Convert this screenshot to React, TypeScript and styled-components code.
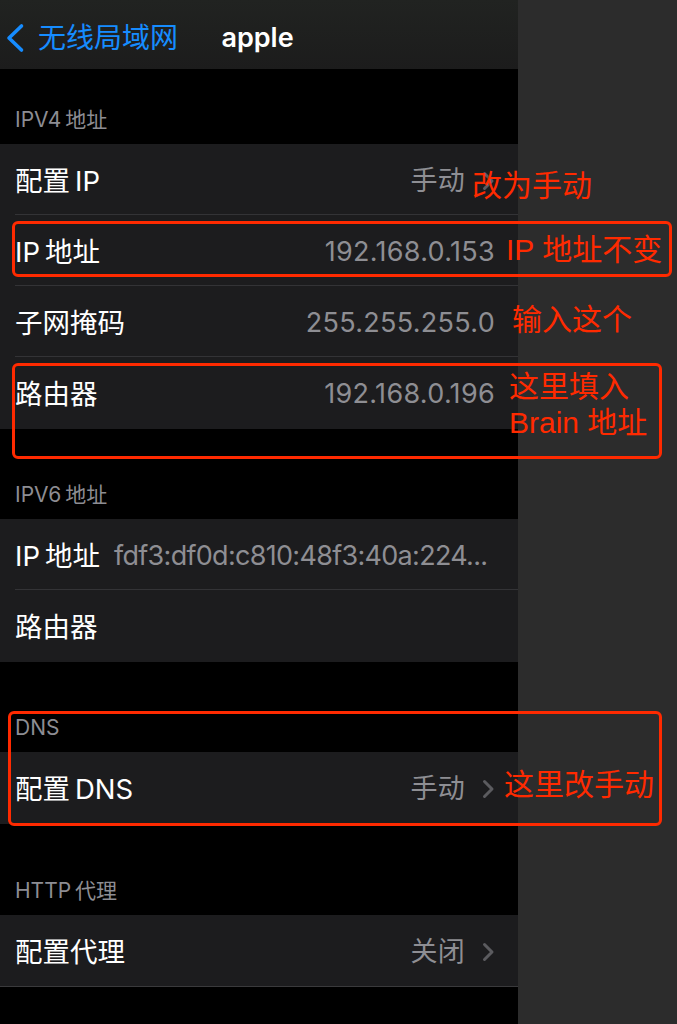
import React from "react";
import styled, { createGlobalStyle } from "styled-components";

const Global = createGlobalStyle`
  html, body { margin: 0; padding: 0; background: #000; }
  * { box-sizing: border-box; }
`;

const FONT = `Inter, "Noto Sans CJK SC", sans-serif`;
const NOTE_FONT = `"Liberation Sans", "Noto Sans CJK SC", sans-serif`;
const RED = "#ff2a00";

const Root = styled.div`
  position: relative;
  width: 677px;
  height: 1024px;
  display: flex;
  font-family: ${FONT};
  overflow: hidden;
`;

const Phone = styled.div`
  width: 518px;
  background: #000;
  display: flex;
  flex-direction: column;
`;

const Side = styled.div`
  flex: 1;
  background: #2c2c2c;
`;

const Nav = styled.div`
  height: 69px;
  display: grid;
  grid-template-columns: 1fr auto 1fr;
  align-items: center;
  padding: 6px 8px 0 5px;
  background: linear-gradient(180deg, #212321 0%, #1c1c1c 100%);
`;

const Back = styled.div`
  display: flex;
  align-items: center;
  gap: 13px;
  color: #168cff;
  font-size: 28px;
  line-height: 32px;
`;

const Title = styled.div`
  color: #fff;
  font-size: 27px;
  font-weight: 600;
  line-height: 32px;
`;

const Header = styled.div<{ $h: number }>`
  height: ${(p) => p.$h}px;
  display: flex;
  align-items: flex-end;
  padding: 0 15px 11px;
  color: #8d8d93;
  font-size: 21px;
  line-height: 26px;
`;

const Group = styled.div<{ $bottom?: boolean }>`
  background: #1c1c1e;
  border-bottom: 1px solid ${(p) => (p.$bottom ? "#3a3a3c" : "transparent")};
`;

const Row = styled.div`
  padding-left: 15px;
`;

const RowInner = styled.div<{ $last?: boolean }>`
  height: 71px;
  display: flex;
  align-items: center;
  padding: 3px 23px 0 0;
  border-bottom: 1px solid ${(p) => (p.$last ? "transparent" : "#333336")};
`;

const Label = styled.div`
  color: #fff;
  font-size: 27.5px;
  line-height: 32px;
  white-space: nowrap;
`;

const Value = styled.div<{ $left?: boolean }>`
  flex: 1;
  min-width: 0;
  color: #8e8e93;
  font-size: 27px;
  line-height: 32px;
  white-space: nowrap;
  overflow: hidden;
  text-overflow: ellipsis;
  letter-spacing: ${(p) => (p.$left ? "-0.7px" : "0.3px")};
  text-align: ${(p) => (p.$left ? "left" : "right")};
  padding-left: ${(p) => (p.$left ? "14px" : "10px")};
`;

const Chevron = styled.svg`
  margin-left: 17px;
  flex: none;
`;

const Overlay = styled.div`
  position: absolute;
  inset: 0;
  pointer-events: none;
`;

const Box = styled.div`
  position: absolute;
  border: 3px solid ${RED};
  border-radius: 6px;
`;

const Note = styled.div`
  position: absolute;
  color: ${RED};
  font-family: ${NOTE_FONT};
  font-size: 30px;
  line-height: 36px;
  white-space: nowrap;
`;

const RightChevron = () => (
  <Chevron width="13" height="20" viewBox="0 0 13 20">
    <path d="M2.5 2.5 L10 10 L2.5 17.5" fill="none" stroke="#5b5b5f" strokeWidth="3" strokeLinecap="round" strokeLinejoin="round" />
  </Chevron>
);

type Item = { label: string; value?: string; chevron?: boolean; left?: boolean };

const Section = ({ items, bottom }: { items: Item[]; bottom?: boolean }) => (
  <Group $bottom={bottom}>
    {items.map((it, i) => (
      <Row key={i}>
        <RowInner $last={i === items.length - 1}>
          <Label>{it.label}</Label>
          <Value $left={it.left}>{it.value ?? ""}</Value>
          {it.chevron && <RightChevron />}
        </RowInner>
      </Row>
    ))}
  </Group>
);

export default function App() {
  return (
    <>
      <Global />
      <Root>
        <Phone>
          <Nav>
            <Back>
              <svg width="20" height="30" viewBox="0 0 20 30">
                <path d="M16.5 3 L4 15 L16.5 27" fill="none" stroke="#168cff" strokeWidth="3.6" strokeLinecap="round" strokeLinejoin="round" />
              </svg>
              无线局域网
            </Back>
            <Title>apple</Title>
            <div />
          </Nav>
          <Header $h={75}>IPV4&#8201;地址</Header>
          <Section
            items={[
              { label: "配置\u2009IP", value: "手动", chevron: true },
              { label: "IP\u2009地址", value: "192.168.0.153" },
              { label: "子网掩码", value: "255.255.255.0" },
              { label: "路由器", value: "192.168.0.196" },
            ]}
          />
          <Header $h={90}>IPV6&#8201;地址</Header>
          <Section
            items={[
              { label: "IP\u2009地址", value: "fdf3:df0d:c810:48f3:40a:224...", left: true },
              { label: "路由器" },
            ]}
          />
          <Header $h={90}>DNS</Header>
          <Section items={[{ label: "配置\u2009DNS", value: "手动", chevron: true }]} />
          <Header $h={91}>HTTP&#8201;代理</Header>
          <Section items={[{ label: "配置代理", value: "关闭", chevron: true }]} bottom />
        </Phone>
        <Side />
        <Overlay>
          <Note style={{ left: 472, top: 168 }}>改为手动</Note>
          <Box style={{ left: 12, top: 221, width: 660, height: 56 }} />
          <Note style={{ left: 506, top: 232 }}>IP 地址不变</Note>
          <Note style={{ left: 512, top: 302 }}>输入这个</Note>
          <Box style={{ left: 12, top: 363, width: 650, height: 96 }} />
          <Note style={{ left: 509, top: 369 }}>这里填入</Note>
          <Note style={{ left: 509, top: 405 }}>Brain 地址</Note>
          <Box style={{ left: 8, top: 711, width: 654, height: 115 }} />
          <Note style={{ left: 504, top: 767 }}>这里改手动</Note>
        </Overlay>
      </Root>
    </>
  );
}
